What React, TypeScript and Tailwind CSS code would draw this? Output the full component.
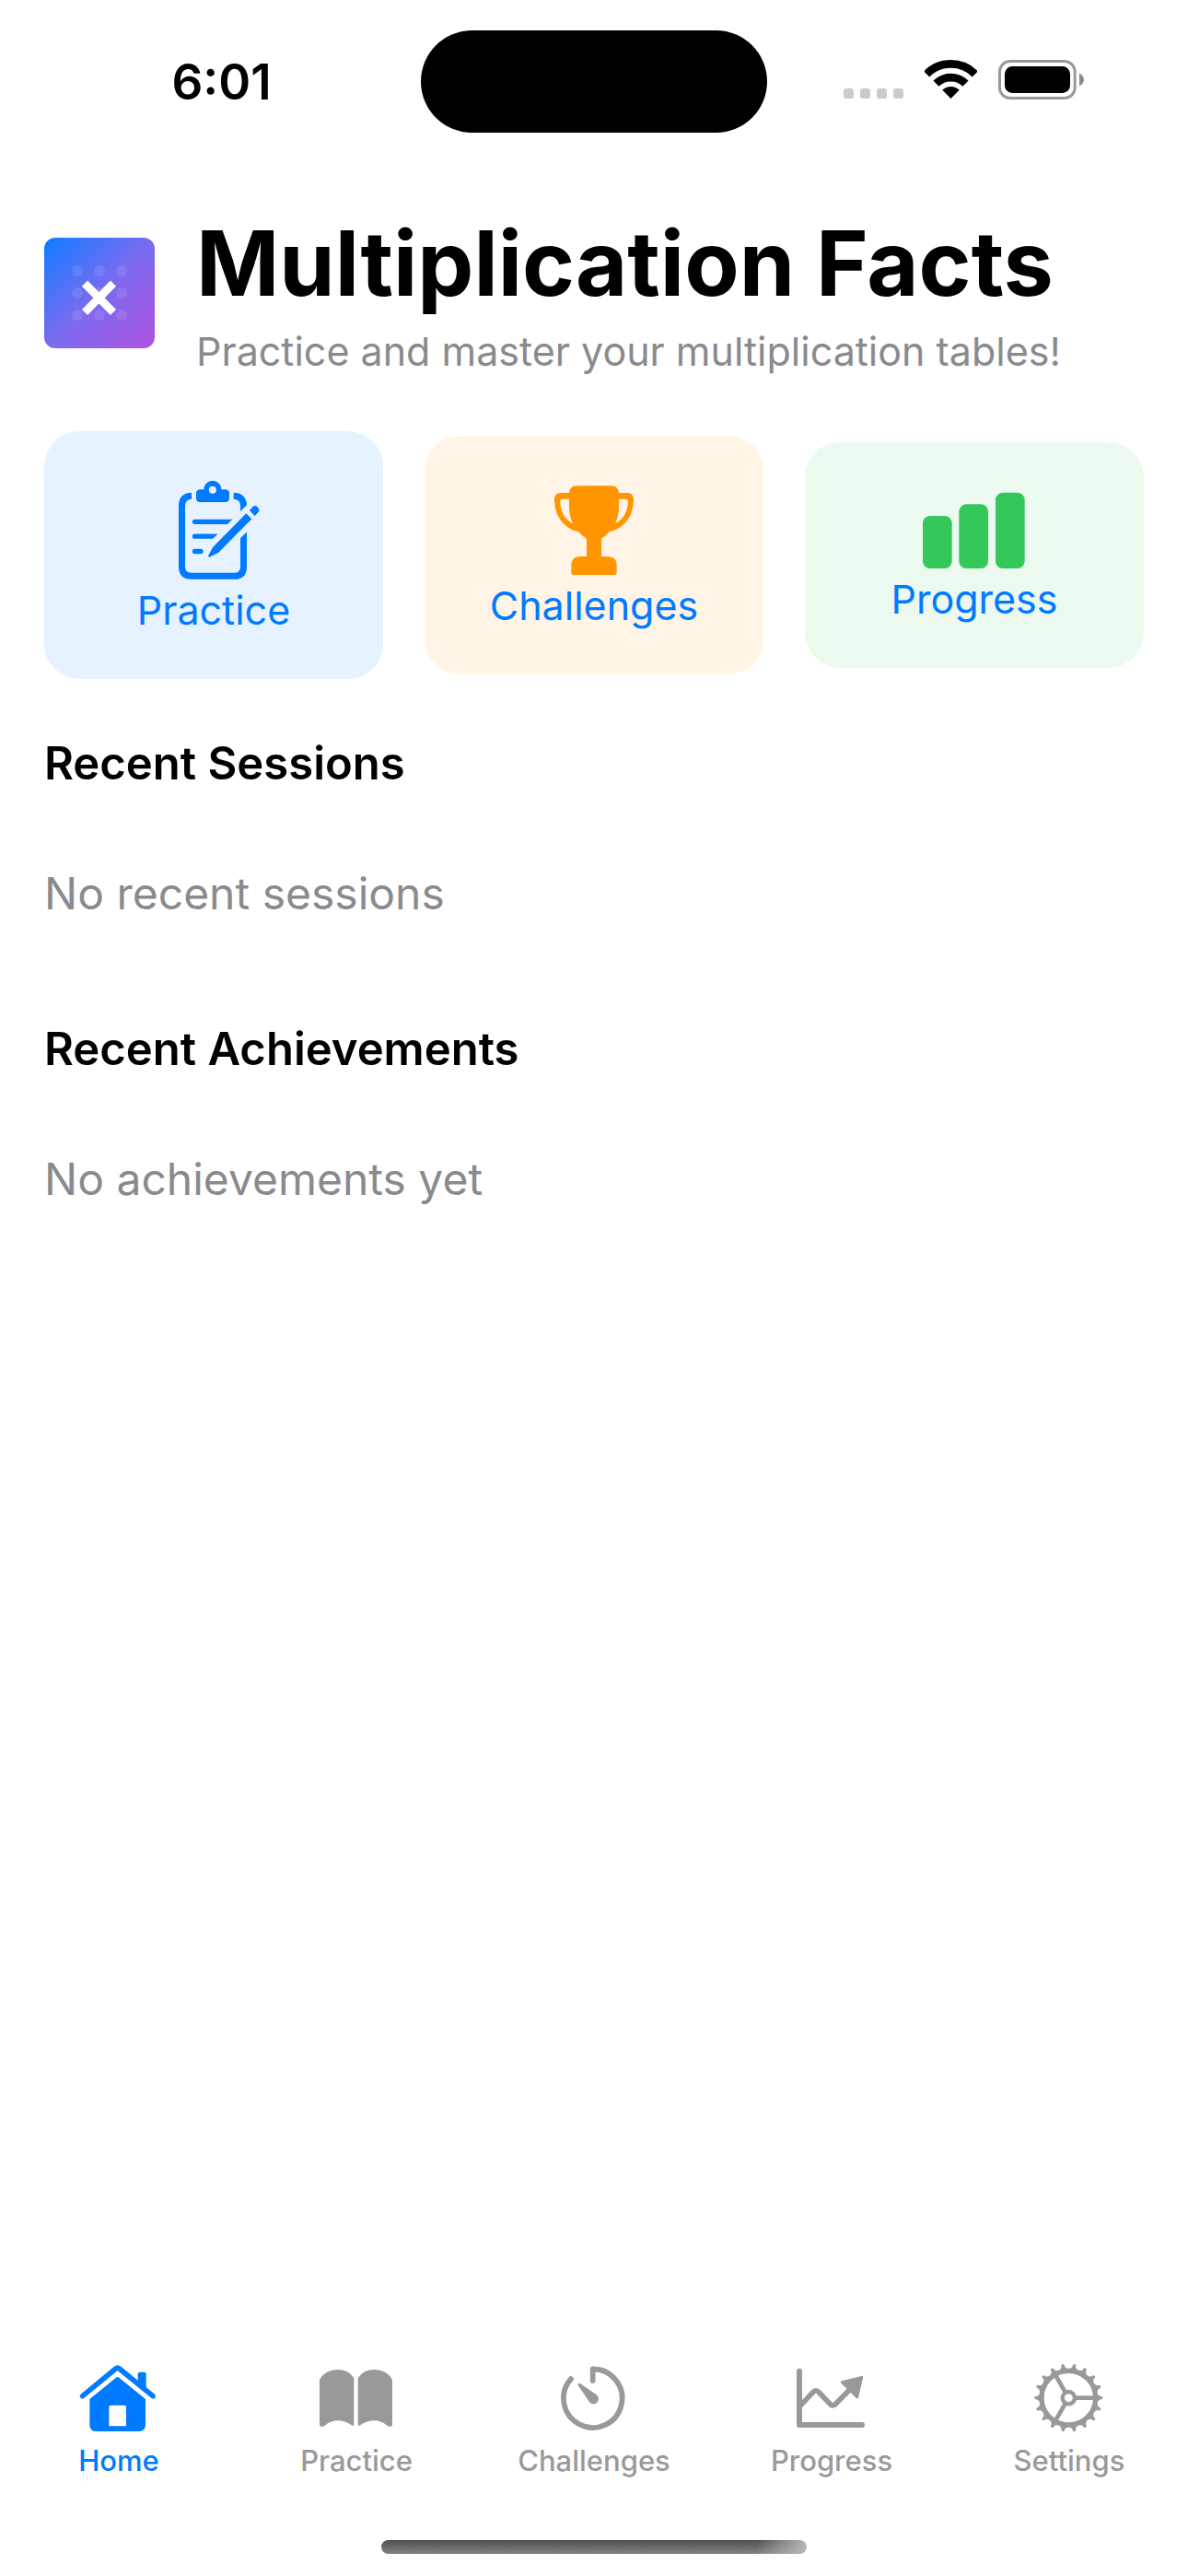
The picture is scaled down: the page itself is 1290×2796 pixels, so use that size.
import type { ReactNode } from "react";

function SignalIcon() {
  return (
    <svg width="65" height="43" viewBox="48 75 195 129" fill="#cbcbcb" aria-hidden="true">
      {[48, 102, 156, 210].map((x) => (
        <rect key={x} x={x} y="168" width="33" height="33" rx="10" />
      ))}
    </svg>
  );
}

function WifiIcon() {
  return (
    <svg width="57" height="43" viewBox="312 75 171 129" fill="none" stroke="#000" strokeWidth="26" aria-hidden="true">
      <path d="M318.5 121A111.500 111.500 0 0 1 476.500 121" />
      <path d="M349.500 152A68 68 0 0 1 445.500 152" />
      <path d="M397.500 200L371 173.500A38 38 0 0 1 424 173.500Z" fill="#000" stroke="#000" strokeWidth="2" strokeLinejoin="round" />
    </svg>
  );
}

function BatteryIcon() {
  return (
    <svg width="93" height="43" viewBox="552 75 279 129" aria-hidden="true">
      <rect x="556.5" y="79.5" width="245" height="120" rx="34" fill="none" stroke="#999" strokeWidth="9" />
      <rect x="573" y="96" width="213" height="87" rx="25" />
      <path d="M816 119C836 127 836 152 816 160Z" fill="#8a8a8a" />
    </svg>
  );
}

function Logo() {
  return (
    <svg width="120" height="120" viewBox="54 51 360 360" className="shrink-0" aria-hidden="true">
      <defs>
        <linearGradient id="logo-fill" x1="0" y1="0" x2="1" y2="1">
          <stop offset="0" stopColor="#007aff" />
          <stop offset="0.08" stopColor="#1f7bff" />
          <stop offset="0.5" stopColor="#7a6bf0" />
          <stop offset="1" stopColor="#af52de" />
        </linearGradient>
      </defs>
      <rect x="54" y="51" width="360" height="360" rx="36" fill="url(#logo-fill)" />
      <g fill="#fff" fillOpacity="0.1">
        {[159, 231, 303].map((y) => [162, 234, 306].map((x) => <circle key={`${x}-${y}`} cx={x} cy={y} r="18" />))}
      </g>
      <path d="M186 200L279 294M279 200L186 294" stroke="#fff" strokeWidth="26" />
    </svg>
  );
}

function ClipboardIcon() {
  return (
    <svg width="100" height="113" viewBox="456 198 300 339" fill="#007aff" aria-hidden="true">
      <defs>
        <mask id="pencil-gap" maskUnits="userSpaceOnUse" x="456" y="198" width="300" height="339">
          <rect x="456" y="198" width="300" height="339" fill="#fff" />
          <path d="M770 282L600 452" stroke="#000" strokeWidth="62" />
        </mask>
      </defs>
      <g mask="url(#pencil-gap)" fill="none" stroke="#007aff">
        <path d="M534 265Q502.500 266 502.500 298V496Q503 526 533 526H673Q703 526 703.500 496V298Q703 266 671 265" strokeWidth="21" />
        <path d="M544.500 349H690M544.500 396.500H650M544.500 445.500H564" strokeWidth="16" strokeLinecap="round" />
      </g>
      <path
        fillRule="evenodd"
        d="M561 244H574A28.500 28.500 0 0 1 631 244H645Q657 245 657 257V272Q657 284 645 285H561Q549 284 549 272V257Q549 245 561 244ZM602.500 233A12 12 0 1 0 602.500 257A12 12 0 1 0 602.500 233Z"
      />
      <path d="M712 322L730 340L622 449L592 464Q587 464 589 459L603 432Z" />
      <path d="M723 312L733 301Q740 294 748 300Q758 309 752 317L740 330Z" />
    </svg>
  );
}

function TrophyIcon() {
  return (
    <svg width="90" height="103" viewBox="480 213 270 309" fill="#ff9500" aria-hidden="true">
      <path
        fillRule="evenodd"
        d="M534 255Q536 233 558 232H672Q694 233 696 255H724Q743 256 744 275C744 332 711 371 666 381Q653 396 639 404V462H660Q688 463 689 488V514Q689 522 681 522H549Q541 522 541 514V488Q543 462 570 462H591V404Q577 396 564 381C519 371 486 332 486 275Q487 256 506 255ZM534 275H511Q505 275 505 281C505 317 522 344 546 354C538 338 534 322 534 300ZM696 275H720Q726 275 726 281C725 317 709 344 684 354C692 338 696 322 696 300Z"
      />
    </svg>
  );
}

function BarsIcon() {
  return (
    <svg width="114" height="89" viewBox="453 234 342 267" fill="#34c759" aria-hidden="true">
      <rect x="456" y="330" width="95" height="171" rx="24" />
      <rect x="574" y="292" width="95" height="209" rx="24" />
      <rect x="693" y="254" width="95" height="247" rx="24" />
    </svg>
  );
}

function HomeIcon() {
  return (
    <svg width="90" height="84" viewBox="72 60 270 252" fill="currentColor" aria-hidden="true">
      <path d="M89 182L197 93Q203 88 209 93L318 182" fill="none" stroke="currentColor" strokeWidth="17" strokeLinecap="round" strokeLinejoin="round" />
      <path d="M269 134V110Q269 104 275 104H290Q296 104 296 110V158Z" />
      <path
        fillRule="evenodd"
        d="M197 123Q203 117 209 123L294 192V276Q293 296 273 297H132Q113 296 112 276V192ZM181 212Q175 212 175 218V280H231V218Q231 212 225 212Z"
      />
    </svg>
  );
}

function BookIcon() {
  return (
    <svg width="90" height="84" viewBox="846 60 270 252" fill="currentColor" aria-hidden="true">
      <path d="M861 128Q880 96 918 96Q957 96 973 124V275Q971 281 965 277Q944 262 921 262Q896 262 877 279Q863 286 861 275Z" />
      <path d="M1098 128Q1079 96 1041 96Q1002 96 986 124V275Q988 281 994 277Q1015 262 1038 262Q1063 262 1082 279Q1096 286 1098 275Z" />
    </svg>
  );
}

function TimerIcon() {
  return (
    <svg width="90" height="84" viewBox="210 60 270 252" fill="none" stroke="currentColor" aria-hidden="true">
      <path d="M341 132V94A95.500 95.500 0 1 1 270 126" strokeWidth="17" strokeLinecap="round" strokeLinejoin="round" />
      <path d="M293 147Q291 139 300 141L351 176A17 17 0 1 1 328 199Z" fill="currentColor" stroke="none" />
    </svg>
  );
}

function TrendIcon() {
  return (
    <svg width="90" height="84" viewBox="984 60 270 252" fill="none" stroke="currentColor" aria-hidden="true">
      <path d="M1014 101V276H1218" strokeWidth="18" strokeLinecap="round" strokeLinejoin="round" />
      <path d="M1016 215L1057 171Q1067 158 1079 171L1112 206Q1122 219 1133 207L1185 154" strokeWidth="17" />
      <path d="M1153 137L1217 121L1202 185Z" fill="currentColor" strokeWidth="9" strokeLinejoin="round" />
    </svg>
  );
}

const TEETH = Array.from({ length: 18 }, (_, i) => i * 20);

function GearIcon() {
  return (
    <svg width="90" height="84" viewBox="168 60 270 252" fill="none" stroke="currentColor" aria-hidden="true">
      <circle cx="301" cy="188" r="88" strokeWidth="16" />
      <circle cx="301" cy="188" r="20" strokeWidth="13" />
      {[0, 120, 240].map((a) => (
        <path key={a} d="M323 188H386" strokeWidth="14" transform={`rotate(${a} 301 188)`} />
      ))}
      {TEETH.map((a) => (
        <path key={a} d="M394 174L402 182L409 183Q416 188 409 193L402 194L394 202Z" fill="currentColor" stroke="none" transform={`rotate(${a} 301 188)`} />
      ))}
    </svg>
  );
}

function StatusBar() {
  return (
    <div className="grid grid-cols-[1fr_376px_1fr] items-center pt-[33px]">
      <time className="pl-6 text-center text-[53px] leading-[60px] font-semibold">6:01</time>
      <div className="h-[111px] rounded-full bg-black" />
      <div className="mb-1 flex justify-center gap-[23px] pr-[30px]">
        <SignalIcon />
        <WifiIcon />
        <BatteryIcon />
      </div>
    </div>
  );
}

function ActionCard({ icon, label, tint }: { icon: ReactNode; label: string; tint: string }) {
  return (
    <button type="button" className={`flex flex-col items-center rounded-[38px] px-12 pt-12 pb-[42px] text-[43px] leading-[66px] text-[#007aff] ${tint}`}>
      {icon}
      <span>{label}</span>
    </button>
  );
}

function Section({ title, empty }: { title: string; empty: string }) {
  return (
    <section className="flex flex-col gap-[75px] text-[48px] leading-[66px]">
      <h2 className="text-[49px] font-semibold">{title}</h2>
      <p className="text-[#8a8a8e]">{empty}</p>
    </section>
  );
}

const TABS = [
  { label: "Home", icon: <HomeIcon />, color: "text-[#007aff]" },
  { label: "Practice", icon: <BookIcon />, color: "text-[#999999]" },
  { label: "Challenges", icon: <TimerIcon />, color: "text-[#999999]" },
  { label: "Progress", icon: <TrendIcon />, color: "text-[#999999]" },
  { label: "Settings", icon: <GearIcon />, color: "text-[#999999]" },
];

export default function App() {
  return (
    <div className="flex min-h-screen flex-col bg-white font-['Inter',sans-serif] text-black">
      <StatusBar />
      <main className="flex-1 px-12 pt-20">
        <header className="flex items-center gap-[45px]">
          <Logo />
          <div className="flex flex-col gap-1">
            <h1 className="text-[97px] leading-[123px] font-bold whitespace-nowrap">Multiplication Facts</h1>
            <p className="text-[43px] leading-[60px] whitespace-nowrap text-[#8a8a8e]">
              Practice and master your multiplication tables!
            </p>
          </div>
        </header>
        <div className="mt-[57px] grid grid-cols-3 items-center gap-[45px]">
          <ActionCard icon={<ClipboardIcon />} label="Practice" tint="bg-[#e6f2ff]" />
          <ActionCard icon={<TrophyIcon />} label="Challenges" tint="bg-[#fff4e6]" />
          <ActionCard icon={<BarsIcon />} label="Progress" tint="bg-[#ebf9ee]" />
        </div>
        <div className="mt-[59px] flex flex-col gap-[103px]">
          <Section title="Recent Sessions" empty="No recent sessions" />
          <Section title="Recent Achievements" empty="No achievements yet" />
        </div>
      </main>
      <nav className="grid grid-cols-5">
        {TABS.map((tab) => (
          <a key={tab.label} href={`#${tab.label.toLowerCase()}`} className={`flex flex-col items-center gap-[9px] text-[31px] leading-9 font-medium ${tab.color}`}>
            {tab.icon}
            <span>{tab.label}</span>
          </a>
        ))}
      </nav>
      <div className="mx-auto mt-[68px] mb-6 h-[15px] w-[462px] rounded-full bg-[linear-gradient(100deg,transparent_88%,#bbbbbb_100%),linear-gradient(#4f4f4f,#828282)]" />
    </div>
  );
}
